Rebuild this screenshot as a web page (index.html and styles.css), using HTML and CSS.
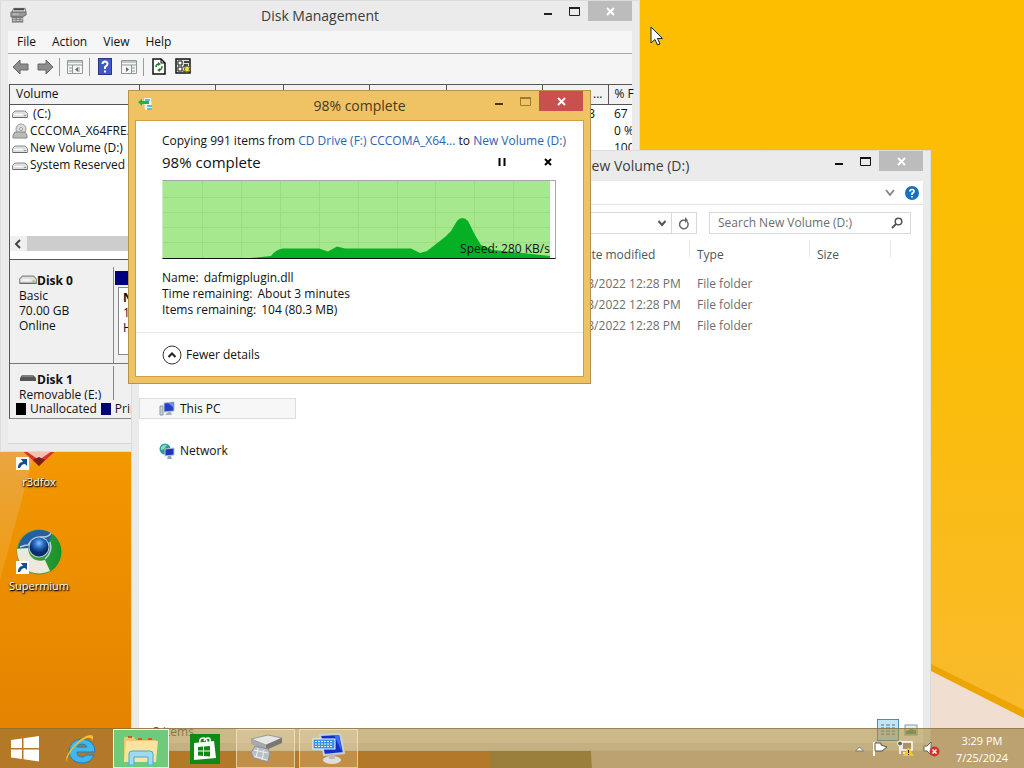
FILE: index.html
```html
<!DOCTYPE html>
<html lang="en">
<head>
    <meta charset="UTF-8">
    <meta name="viewport" content="width=device-width, initial-scale=1.0">
    <title>Desktop</title>
    <link rel="stylesheet" href="styles.css">
</head>
<body>
  <svg class="wallpaper" viewBox="0 0 1024 768" preserveAspectRatio="none" aria-hidden="true">
    <defs>
      <linearGradient id="wallLeft" x1="0" y1="0" x2="0" y2="1">
        <stop offset="0.55" stop-color="#f39a00"/><stop offset="1" stop-color="#e38000"/>
      </linearGradient>
      <linearGradient id="wallRight" x1="0" y1="0" x2="0" y2="1">
        <stop offset="0" stop-color="#fdbe00"/><stop offset="0.5" stop-color="#fbbd08"/><stop offset="1" stop-color="#f9ba2c"/>
      </linearGradient>
      <linearGradient id="wallSlice" x1="0" y1="0" x2="0" y2="1">
        <stop offset="0" stop-color="#e9a645"/><stop offset="1" stop-color="#f09c10"/>
      </linearGradient>
    </defs>
    <rect width="490" height="768" fill="url(#wallLeft)"/>
    <rect y="729" width="490" height="39" fill="#c4600c"/>
    <path d="M0 440H38L0 580Z" fill="url(#wallSlice)"/>
    <path d="M490 700H588L592 768H490Z" fill="#856e3c"/>
    <path d="M588 700H1024V768H592Z" fill="#dcc6c0"/>
    <path d="M925 660L1024 712V729H925Z" fill="#f0dfd0"/>
    <path d="M600 0H1024V718L931 671L600 500Z" fill="#eda405"/>
    <path d="M600 0H1024V710L931 664L600 500Z" fill="url(#wallRight)"/>
  </svg>

  <div class="shortcut shortcut-fox">
    <svg width="48" height="48" viewBox="0 0 48 48">
      <path d="M0 20L24 42L48 20L36 26L24 28L12 26Z" fill="#d8322f"/>
      <path d="M8 25L24 36L40 25Z" fill="#f4c3ac"/>
      <path d="M18 36L24 42L30 36L24 33Z" fill="#7c1f1a"/>
      <rect x="1" y="33" width="13" height="13" fill="#fff"/>
      <path d="M3 44C3 40 5 38 8 38L6 35H12V42L10 40C7 40 6 42 5 44Z" fill="#184d8f"/>
    </svg>
    <span>r3dfox</span>
  </div>
  <div class="shortcut shortcut-supermium">
    <svg width="48" height="48" viewBox="0 0 48 48">
      <defs>
        <radialGradient id="ball" cx="0.5" cy="0.3"><stop offset="0" stop-color="#7fc4ff"/><stop offset="0.5" stop-color="#2a6cc4"/><stop offset="1" stop-color="#0b2a6c"/></radialGradient>
        <linearGradient id="ring" x1="0" y1="0" x2="1" y2="0"><stop offset="0" stop-color="#5da545"/><stop offset="1" stop-color="#15922a"/></linearGradient>
      </defs>
      <circle cx="24" cy="24" r="22.500" fill="url(#ring)"/>
      <path d="M3 20C6 4 24 -3 37 6L33 17C27 8 15 11 13 21Z" fill="#2461a3"/>
      <path d="M2 21L13 20C14 32 23 34 30 32L35 43C20 50 2 42 2 21Z" fill="#ece8dc"/>
      <path d="M5 19Q10 17 13 17Q18 8 28 9Q34 9 36 5M35 14Q38 24 30 31" fill="none" stroke="#b9d2df" stroke-width="1.500"/>
      <circle cx="24" cy="19" r="10.500" fill="#b4ccd8"/>
      <circle cx="24" cy="19" r="9.500" fill="url(#ball)"/>
      <rect x="1" y="33" width="13" height="13" fill="#fff"/>
      <path d="M3 44C3 40 5 38 8 38L6 35H12V42L10 40C7 40 6 42 5 44Z" fill="#184d8f"/>
    </svg>
    <span>Supermium</span>
  </div>

  <!-- Disk Management -->
  <section class="window disk-window">
    <header class="titlebar">
      <svg class="title-icon" width="17" height="18" viewBox="0 0 18 18">
        <path d="M4 2H16L17 6H2Z" fill="#e4e4e4" stroke="#777"/>
        <path d="M4 3H15" stroke="#444" stroke-width="2"/>
        <path d="M1 6H17V9L13 11H1Z" fill="#999" stroke="#666"/>
        <path d="M2 11H14V17H2Z" fill="#777"/>
        <path d="M3 8H9M3 13H14M3 15H13" stroke="#ddd" stroke-dasharray="3 1"/>
      </svg>
      <h1>Disk Management</h1>
      <div class="controls">
        <button aria-label="Minimize"><svg width="11" height="11"><path d="M2 8H10" stroke="#222" stroke-width="2"/></svg></button>
        <button aria-label="Maximize"><svg width="11" height="11"><path d="M.5 2V9.500H10.500V2" fill="none" stroke="#222"/><path d="M0 2H11" stroke="#222" stroke-width="2"/></svg></button>
        <button class="close" aria-label="Close"><svg width="9" height="9"><path d="M1 1L8 8M8 1L1 8" stroke="#fff" stroke-width="2"/></svg></button>
      </div>
    </header>
    <div class="window-body disk-body">
      <nav class="menubar">
        <button>File</button>
        <button>Action</button>
        <button>View</button>
        <button>Help</button>
      </nav>
      <div class="toolbar">
        <button aria-label="Back"><svg width="18" height="16"><path d="M1 8L8 1V5H16V11H8V15Z" fill="#8d8d8d" stroke="#666"/></svg></button>
        <button aria-label="Forward"><svg width="18" height="16"><path d="M17 8L10 1V5H2V11H10V15Z" fill="#8d8d8d" stroke="#666"/></svg></button>
        <i class="divider"></i>
        <button aria-label="Console tree"><svg width="16" height="14"><path d="M.5 .5H15.500V13.500H.5Z" fill="#f6f6f6" stroke="#8d9996"/><path d="M1 2H15M1 5H15" stroke="#8d9996"/><path d="M5.500 5V13M2 8H5M2 11H5M12 7V12" stroke="#8d9996"/><path d="M11 7V12L8 9.500Z" fill="#667"/></svg></button>
        <i class="divider"></i>
        <button aria-label="Help"><svg width="14" height="17"><rect x=".5" y=".5" width="13" height="16" fill="#4059c4" stroke="#26388c"/><path d="M4.500 6Q4.500 3.500 7 3.500T9.500 6Q9.500 7.500 7 9V11M7 12.500V14.500" fill="none" stroke="#fff" stroke-width="2"/></svg></button>
        <button aria-label="Action pane"><svg width="16" height="14"><path d="M.5 .5H15.500V13.500H.5Z" fill="#f6f6f6" stroke="#8d9996"/><path d="M1 2H15M1 5H15" stroke="#8d9996"/><path d="M10.500 5V13M11 8H14M11 11H14" stroke="#8d9996"/><path d="M5 7V12L8 9.500Z" fill="#667"/></svg></button>
        <i class="divider"></i>
        <button aria-label="Refresh"><svg width="14" height="17"><path d="M1 1H9L13 5V16H1Z" fill="#fff" stroke="#111" stroke-width="1.500"/><path d="M9 1V5H13" fill="none" stroke="#111"/><path d="M4 9Q4 6 7 6M10 8Q10 12 7 12" fill="none" stroke="#2c7a2c" stroke-width="1.500"/><path d="M6 4L9 6L6 8ZM8 10L5 12L8 14Z" fill="#2c7a2c"/></svg></button>
        <button aria-label="Settings"><svg width="17" height="17"><rect x="1" y="1" width="14" height="14" fill="#ddd" stroke="#111" stroke-width="1.500"/><path d="M3 3H7V7H3ZM3 9H7V13H3Z" fill="#fff" stroke="#111"/><path d="M9 4H14M9 7H13" fill="none" stroke="#111" stroke-width="1.500"/><path d="M12 6L13 9L16 8L14 11L16 14L13 13L12 16L11 13L8 14L10 11L8 8L11 9Z" fill="#f0e428" stroke="#554"/></svg></button>
      </div>
      <div class="volumes">
        <table class="volume-table">
          <colgroup><col class="c-volume"><col class="c-layout"><col class="c-type"><col class="c-fs"><col class="c-status"><col class="c-cap"><col class="c-free"><col></colgroup>
          <thead>
            <tr><th>Volume</th><th></th><th></th><th></th><th></th><th></th><th class="right">...</th><th>% F</th></tr>
          </thead>
          <tbody>
            <tr><td><svg class="drive" width="16" height="9"><use href="#drive"/></svg>&nbsp;(C:)</td><td></td><td></td><td></td><td></td><td></td><td class="free">3</td><td>67</td></tr>
            <tr><td><svg class="drive" width="16" height="16"><circle cx="9" cy="6" r="5" fill="#ddd" stroke="#999"/><circle cx="9" cy="6" r="1.500" fill="#fff" stroke="#999"/><path d="M3 9H13L15 12V15H1V12Z" fill="#bbb" stroke="#888"/></svg>CCCOMA_X64FRE...</td><td></td><td></td><td></td><td></td><td></td><td></td><td>0 %</td></tr>
            <tr><td><svg class="drive" width="16" height="9"><use href="#drive"/></svg>New Volume (D:)</td><td></td><td></td><td></td><td></td><td></td><td></td><td>100</td></tr>
            <tr><td><svg class="drive" width="16" height="9"><use href="#drive"/></svg>System Reserved</td><td></td><td></td><td></td><td></td><td></td><td></td><td></td></tr>
          </tbody>
        </table>
        <div class="scrollbar">
          <button aria-label="Scroll left"><svg width="8" height="10"><path d="M6 1L2 5L6 9" fill="none" stroke="#444" stroke-width="2"/></svg></button>
          <div class="thumb"></div>
        </div>
      </div>
      <div class="disks">
        <div class="disk-row">
          <div class="disk-label">
            <strong><svg width="18" height="10"><use href="#drive"/></svg>Disk 0</strong>
            <span>Basic</span><span>70.00 GB</span><span>Online</span>
          </div>
          <div class="partition">
            <div class="stripe"></div>
            <div class="part-box"><strong>N</strong><span>1</span><span>H</span></div>
          </div>
        </div>
        <div class="disk-row">
          <div class="disk-label">
            <strong><svg width="18" height="10"><path d="M3 1H14L17 4V7H1V4Z" fill="#555"/><path d="M3 2H14" stroke="#aaa"/></svg>Disk 1</strong>
            <span>Removable (E:)</span>
          </div>
        </div>
      </div>
      <div class="legend"><i class="swatch black"></i>Unallocated<i class="swatch navy"></i>Primary</div>
      <div class="statusbar"></div>
    </div>
  </section>

  <!-- Explorer -->
  <section class="window explorer-window">
    <header class="titlebar">
      <h1>New Volume (D:)</h1>
      <div class="controls">
        <button aria-label="Minimize"><svg width="11" height="11"><path d="M2 8H10" stroke="#111" stroke-width="2"/></svg></button>
        <button aria-label="Maximize"><svg width="11" height="11"><path d="M.5 2V9.500H10.500V2" fill="none" stroke="#111"/><path d="M0 2H11" stroke="#111" stroke-width="2"/></svg></button>
        <button class="close" aria-label="Close"><svg width="9" height="9"><path d="M1 1L8 8M8 1L1 8" stroke="#fff" stroke-width="2"/></svg></button>
      </div>
    </header>
    <div class="window-body explorer-body">
      <div class="ribbon">
        <button aria-label="Expand ribbon"><svg width="10" height="8"><path d="M1 1L5 6L9 1" fill="none" stroke="#888" stroke-width="2"/></svg></button>
        <button aria-label="Help"><svg width="14" height="14"><circle cx="7" cy="7" r="7" fill="#1670c0"/><path d="M5 5.500Q5 3.500 7 3.500T9 5.500Q9 6.500 7 7.500V9M7 10V11.500" fill="none" stroke="#fff" stroke-width="1.700"/></svg></button>
      </div>
      <div class="address-row">
        <div class="address">
          <button class="drop" aria-label="Previous locations"><svg width="10" height="7"><path d="M1.500 1L5 5L8.500 1" fill="none" stroke="#555" stroke-width="2"/></svg></button>
          <button class="reload" aria-label="Refresh"><svg width="12" height="13"><path d="M9 4.500A4.300 4.300 0 1 1 5 3.200H8" fill="none" stroke="#666" stroke-width="1.500"/><path d="M7 0L10 3.200L7 6Z" fill="#666"/></svg></button>
        </div>
        <label class="search">
          <input type="text" placeholder="Search New Volume (D:)" aria-label="Search New Volume (D:)">
          <svg width="12" height="12"><circle cx="7.500" cy="4.500" r="3.300" fill="none" stroke="#555" stroke-width="1.500"/><path d="M5 7L1 11" stroke="#555" stroke-width="2"/></svg>
        </label>
      </div>
      <div class="explorer-main">
        <nav class="tree">
          <a class="selected" href="#"><svg width="16" height="16"><path d="M1 5H4V14H1Z" fill="#ccd3da" stroke="#8b98a6"/><path d="M5 2L15 1V10L5 11Z" fill="#2540c8" stroke="#b7c4d8"/><path d="M9 2L15 1V7Z" fill="#6c8bf0"/><path d="M6 14L9 11H12L13 14Z" fill="#a7b2bd"/></svg>This PC</a>
          <a href="#"><svg width="16" height="16"><circle cx="6" cy="6" r="5.500" fill="#2f9a9c"/><path d="M2 4Q5 1 8 2L5 6L2 7Z" fill="#8fd9c0"/><path d="M6 6L15 5V12L6 13Z" fill="#2035bd" stroke="#b7c4d8"/><path d="M9 13H12L13 16H8Z" fill="#98a5b4"/></svg>Network</a>
        </nav>
        <table class="files">
          <colgroup><col class="f-name"><col class="f-date"><col class="f-type"><col class="f-size"></colgroup>
          <thead><tr><th></th><th>Date modified</th><th>Type</th><th>Size</th></tr></thead>
          <tbody>
            <tr><td></td><td>4/8/2022 12:28 PM</td><td>File folder</td><td></td></tr>
            <tr><td></td><td>4/8/2022 12:28 PM</td><td>File folder</td><td></td></tr>
            <tr><td></td><td>4/8/2022 12:28 PM</td><td>File folder</td><td></td></tr>
          </tbody>
        </table>
      </div>
      <div class="explorer-status">
        <span>3 items</span>
        <div class="views">
          <button class="active" aria-label="Details"><svg width="16" height="14"><path d="M1 2H4M1 5H4M1 8H4M1 11H4M6 2H10M12 2H15M6 5H10M12 5H15M6 8H10M12 8H15M6 11H10M12 11H15" stroke="#51758a"/></svg></button>
          <button aria-label="Large icons"><svg width="14" height="12"><rect x="1" y="1" width="12" height="10" fill="#dfeef2" stroke="#8a9a9c"/><path d="M2 7L7 5L12 6V10H2Z" fill="#4f9a66"/></svg></button>
        </div>
      </div>
    </div>
  </section>

  <!-- Copy progress -->
  <section class="window copy-window">
    <header class="titlebar">
      <svg class="title-icon" width="16" height="16" viewBox="0 0 16 16">
        <path d="M6 2H13L14 14H7Z" fill="#e9f5fa"/>
        <path d="M7 4H12M9 10H14M9 13H14" stroke="#6fb6d8" stroke-width="2"/>
        <path d="M0 6L4 3V5H11V8H4V10Z" fill="#27b04a"/>
      </svg>
      <h1>98% complete</h1>
      <div class="controls">
        <button aria-label="Minimize"><svg width="11" height="11"><path d="M2 8H10" stroke="#4b3410" stroke-width="2"/></svg></button>
        <button aria-label="Maximize"><svg width="11" height="11"><path d="M.5 2V9.500H10.500V2" fill="none" stroke="#9c7c34"/><path d="M0 2H11" stroke="#9c7c34" stroke-width="2"/></svg></button>
        <button class="close" aria-label="Close"><svg width="9" height="9"><path d="M1 1L8 8M8 1L1 8" stroke="#fff" stroke-width="2"/></svg></button>
      </div>
    </header>
    <div class="window-body copy-body">
      <div class="copy-main">
        <p>Copying 991 items from <a href="#">CD Drive (F:) CCCOMA_X64...</a> to <a href="#">New Volume (D:)</a></p>
        <div class="progress-head">
          <h2>98% complete</h2>
          <button aria-label="Pause"><svg width="8" height="8"><path d="M1.500 0V8M6.500 0V8" stroke="#000" stroke-width="2"/></svg></button>
          <button aria-label="Cancel"><svg width="8" height="8"><path d="M1 1L7 7M7 1L1 7" stroke="#000" stroke-width="2"/></svg></button>
        </div>
        <div class="graph">
          <svg viewBox="0 0 392 77" preserveAspectRatio="none">
            <rect width="387" height="77" fill="#a6e88d"/>
            <path d="M0 16.500H387M0 31.500H387M0 46.500H387M0 61.500H387M39.500 0V77M78.500 0V77M117.500 0V77M156.500 0V77M195.500 0V77M234.500 0V77M272.500 0V77M311.500 0V77M350.500 0V77" stroke="#9bdc83"/>
            <path d="M88 77L108 75Q113 68 120 67.500H156L165 70.500L174 65.500L182 67.500H248L257 72L264 70L282 56L288 50L294 40Q299 34 305 40L312 54L318 64L330 69L350 71L387 75V77Z" fill="#06b025"/>
          </svg>
          <span>Speed: 280 KB/s</span>
        </div>
        <dl>
          <div><dt>Name:</dt><dd>dafmigplugin.dll</dd></div>
          <div><dt>Time remaining:</dt><dd>About 3 minutes</dd></div>
          <div><dt>Items remaining:</dt><dd>104 (80.3 MB)</dd></div>
        </dl>
      </div>
      <footer>
        <button class="details">
          <svg width="20" height="20"><circle cx="10" cy="10" r="9" fill="#fff" stroke="#333"/><path d="M6.500 12L10 8.500L13.500 12" fill="none" stroke="#222" stroke-width="2"/></svg>
          Fewer details
        </button>
      </footer>
    </div>
  </section>

  <footer class="taskbar">
    <button class="task start" aria-label="Start"><svg width="28" height="26"><path d="M0 4L11 2.500V12H0ZM12.500 2.300L28 0V12H12.500ZM0 13.500H11V23L0 21.500ZM12.500 13.500H28V25.500L12.500 23.200Z" fill="#fff"/></svg></button>
    <button class="task" aria-label="Internet Explorer"><svg width="34" height="32"><path d="M31 19H13Q13 24 18 24Q21 24 22 22H30Q27 30 18 30Q5 29 5 18Q6 7 18 6Q31 7 31 19ZM13 14H23Q22 11 18 11Q14 11 13 14Z" fill="#43b7ea" stroke="#1a7fc4" fill-rule="evenodd"/><path d="M4 30Q-1 26 8 15Q18 3 26 2Q31 2 28 8Q28 4 23 5Q15 8 8 17Q1 27 4 30Z" fill="#f6c12c"/></svg></button>
    <button class="task open current" aria-label="File Explorer"><svg width="38" height="32"><path d="M2 4H12L14 7H34V29H2Z" fill="#e9c96b"/><path d="M4 8H36L34 29H2Z" fill="#f8e3a0"/><path d="M6 4H10M16 6H20M26 6H30" stroke="#cf5a3a" stroke-width="2"/><path d="M7 32V21Q7 18 10 18H28Q31 18 31 21V32H26V24H12V32Z" fill="#9edaf2" stroke="#4ea7d0"/></svg></button>
    <button class="task" aria-label="Store"><svg width="30" height="30"><rect width="30" height="30" fill="#0f8a14"/><path d="M4 9L24 7L26 24L4 26Z" fill="#fff"/><path d="M10 9Q9 4 13 4T17 9M14 7Q15 4 18 4T20 8" fill="none" stroke="#fff" stroke-width="1.500"/><path d="M8 13L13 12.500V16.500H8ZM14 12.400L20 12V16.500H14ZM8 17.500H13V22L8 21.500ZM14 17.500H20V22.500L14 22Z" fill="#0f8a14"/></svg></button>
    <button class="task open" aria-label="Disk Management"><svg width="36" height="32"><path d="M3 6L20 2L34 5L18 12Z" fill="#e6e6e6" stroke="#999"/><path d="M3 6L18 12V17L3 11Z" fill="#aaa"/><path d="M18 12L34 5V10L18 17Z" fill="#777"/><path d="M7 13L20 16L22 20L20 29L6 25L3 20Z" fill="#b9bfc6" stroke="#8a9098"/><path d="M6 17L20 20M6 23L19 27M10 15L8 25M16 17L14 27" stroke="#eee"/></svg></button>
    <button class="task open" aria-label="Keyboard"><svg width="34" height="32"><path d="M8 2L28 1L32 20L12 22Z" fill="#1330c4" stroke="#c6d2e4" stroke-width="2"/><path d="M22 2L27 2L30 19Z" fill="#3c6cf0"/><ellipse cx="20" cy="27" rx="9" ry="4" fill="#ddd"/><path d="M17 21H23V26H17Z" fill="#bbb"/><rect x="1" y="6" width="22" height="10" fill="#3f8fe0" stroke="#dff"/><path d="M3 8.500H21M3 11H21M3 13.500H21" stroke="#fff" stroke-dasharray="2 1"/></svg></button>
    <div class="tray">
      <button aria-label="Show hidden icons"><svg width="9" height="6"><path d="M.5 5L4.500 1L8.500 5Z" fill="#fff" stroke="#776"/></svg></button>
      <button aria-label="Action Center"><svg width="15" height="16"><path d="M1 1V15" stroke="#fff" stroke-width="2"/><path d="M2 2H8V4L14 6L9 10H2Z" fill="#fff" stroke="#554"/></svg></button>
      <button aria-label="Network"><svg width="17" height="17"><rect x="5" y="2" width="10" height="8" fill="#a8926a" stroke="#fff" stroke-width="1.500"/><circle cx="3" cy="3.500" r="2.500" fill="#665" stroke="#fff"/><path d="M3 6V14M6 13H12" stroke="#fff" stroke-width="1.500"/><path d="M11.500 7L17 16H6Z" fill="#f6c918"/><path d="M11.500 10V13M11.500 14V15" stroke="#222"/></svg></button>
      <button aria-label="Volume muted"><svg width="17" height="16"><path d="M1 5H4L8 1V14L4 10H1Z" fill="#fff" stroke="#665"/><circle cx="11.500" cy="10.500" r="5" fill="#d5302c"/><path d="M9.500 8.500L13.500 12.500M13.500 8.500L9.500 12.500" stroke="#fff" stroke-width="1.500"/></svg></button>
      <time class="clock"><span>3:29 PM</span><span>7/25/2024</span></time>
    </div>
  </footer>

  <svg class="cursor" width="14" height="20"><path d="M1 1V17L5 13.500L7.500 19L10 18L7.500 12.500H12.500Z" fill="#fff" stroke="#222"/></svg>

  <svg width="0" height="0" class="defs" aria-hidden="true">
    <symbol id="drive" viewBox="0 0 16 9"><path d="M3 1H13L15.500 3.500V7.500H.5V3.500Z" fill="#e0e0e0" stroke="#8a8a8a"/><path d="M1 7.500H15" stroke="#666"/><path d="M2 4.500H11" stroke="#fff"/><path d="M12 5.500H14" stroke="#7a7"/></symbol>
  </svg>
</body>
</html>
```
FILE: styles.css
```css
:root {
    --frame: #ebebeb;
    --amber: #efc364;
    --line: #d9d9d9;
}

* {
    box-sizing: border-box;
}

body {
    margin: 0;
    height: 100vh;
    overflow: hidden;
    position: relative;
    background: #f39c00;
    color: #111;
    font: 12px/16px "Open Sans", "Noto Sans", sans-serif;
}

h1, h2, p, dl, dd {
    margin: 0;
    font-weight: normal;
}

button {
    display: flex;
    align-items: center;
    justify-content: center;
    padding: 0;
    border: 0;
    background: none;
    color: inherit;
    font: inherit;
}

a {
    color: #2a63b0;
    text-decoration: none;
}

svg {
    flex: none;
}

.wallpaper {
    position: absolute;
    inset: 0;
    width: 100%;
    height: 100%;
}

.defs {
    position: absolute;
}

/* Desktop shortcuts */
.shortcut {
    position: absolute;
    left: 0;
    width: 78px;
    display: flex;
    flex-direction: column;
    align-items: center;
    gap: 2px;
    color: #fff;
    font-size: 11px;
    text-shadow: 0 1px 2px #000, 1px 1px 1px #000;
}

.shortcut-fox {
    top: 424px;
}

.shortcut-supermium {
    top: 528px;
}

/* Windows */
.window {
    position: absolute;
    display: flex;
    flex-direction: column;
    padding: 0 7px 7px;
    border: 1px solid #dcdcdc;
    background: var(--frame);
}

.titlebar {
    flex: none;
    display: grid;
    grid-template-columns: 1fr auto 1fr;
    height: 30px;
}

.titlebar h1 {
    grid-column: 2;
    color: #3c3c3c;
    font-size: 14px;
    line-height: 30px;
}

.title-icon {
    grid-column: 1;
    grid-row: 1;
    margin: 5px 0 0 2px;
}

.controls {
    grid-column: 3;
    display: flex;
    justify-content: flex-end;
    height: 20px;
}

.controls button {
    width: 27px;
}

.controls .close {
    width: 44px;
    background: #bcbcbc;
}

.window-body {
    flex: 1;
    min-height: 0;
    display: flex;
    flex-direction: column;
}

/* Disk Management */
.disk-window {
    left: 0;
    top: 0;
    width: 640px;
    height: 452px;
}

.disk-body {
    background: #f0f0f0;
}

.menubar {
    display: flex;
    gap: 16px;
    padding: 0 9px;
    height: 23px;
    border-bottom: 1px solid #a8a8a8;
    background: #f6f6f6;
}

.toolbar {
    display: flex;
    align-items: center;
    gap: 4px;
    padding: 0 3px 5px;
    height: 30px;
    background: #f5f5f5;
}

.toolbar button {
    width: 20px;
}

.toolbar .divider {
    width: 1px;
    height: 18px;
    margin-right: 1px;
    background: #9a9a9a;
}

.volumes {
    display: flex;
    flex-direction: column;
    height: 176px;
    margin-left: 1px;
    padding-bottom: 8px;
    border: 1px solid #555;
    border-right: 0;
    background: #fff;
}

.volume-table {
    table-layout: fixed;
    width: 100%;
    border-collapse: collapse;
}

.volume-table th {
    height: 19px;
    padding: 0 6px;
    border-right: 1px solid #555;
    border-bottom: 1px solid #555;
    background: #f2f2f2;
    font-weight: normal;
    text-align: left;
    white-space: nowrap;
}

.volume-table th:last-child {
    border-right: 0;
}

.volume-table .right {
    text-align: right;
    padding: 0 5px;
}

.volume-table td {
    height: 17px;
    padding: 0 2px;
    line-height: 17px;
    white-space: nowrap;
    overflow: hidden;
}

.volume-table th:last-child,
.volume-table td:last-child {
    padding: 0 0 0 6px;
}

.volume-table .free {
    text-align: right;
    padding-right: 13px;
}

.volume-table .drive {
    margin-right: 2px;
    vertical-align: middle;
}

.c-volume { width: 129px; }
.c-layout { width: 76px; }
.c-type { width: 68px; }
.c-fs { width: 86px; }
.c-status { width: 77px; }
.c-cap { width: 96px; }
.c-free { width: 66px; }

.scrollbar {
    display: flex;
    gap: 1px;
    height: 15px;
    margin-top: auto;
    background: #f0f0f0;
}

.scrollbar button {
    width: 16px;
}

.scrollbar .thumb {
    flex: 1;
    background: #cdcdcd;
}

.disks {
    height: 140px;
    margin-left: 1px;
    padding-top: 7px;
    overflow: hidden;
    border-left: 1px solid #555;
}

.disk-row {
    display: flex;
    height: 97px;
    margin-bottom: 2px;
    border-bottom: 1px solid #777;
}

.disk-label {
    width: 104px;
    padding: 6px 0 0 9px;
    border-right: 1px solid #888;
    line-height: 15px;
}

.disk-label span,
.disk-label strong,
.part-box span,
.part-box strong {
    display: block;
    white-space: nowrap;
}

.partition {
    flex: 1;
    padding: 4px 0 0 1px;
}

.stripe {
    height: 14px;
    background: #00007f;
}

.part-box {
    height: 68px;
    margin: 2px 0 0 3px;
    padding: 2px 4px;
    border: 1px solid #888;
    background: #fff;
    line-height: 15px;
}

.legend {
    display: flex;
    align-items: center;
    gap: 4px;
    height: 19px;
    margin-left: 1px;
    padding-left: 6px;
    border-left: 1px solid #555;
    border-bottom: 1px solid #888;
}

.swatch {
    width: 10px;
    height: 12px;
}

.black { background: #000; }
.navy { background: #00007f; }

.statusbar {
    height: 24px;
    margin-top: 1px;
    border-bottom: 1px solid #d6d6d6;
}

/* Explorer */
.explorer-window {
    left: 131px;
    top: 150px;
    width: 800px;
    height: 601px;
}

.explorer-window .titlebar {
    grid-template-columns: 442px auto 1fr;
}

.explorer-body {
    background: #fff;
}

.ribbon {
    display: flex;
    align-items: center;
    justify-content: flex-end;
    gap: 10px;
    height: 24px;
    padding-right: 4px;
    border-bottom: 1px solid #e6e6e6;
}

.address-row {
    display: flex;
    gap: 12px;
    padding: 7px 12px 0 70px;
}

.address,
.search {
    display: flex;
    height: 22px;
    border: 1px solid var(--line);
}

.address {
    flex: 1;
    justify-content: flex-end;
}

.address .drop {
    width: 18px;
}

.address .reload {
    width: 25px;
    border-left: 1px solid var(--line);
}

.search {
    width: 202px;
    align-items: center;
    padding: 0 7px 0 8px;
}

.search input {
    flex: 1;
    min-width: 0;
    padding: 0;
    border: 0;
    outline: 0;
    background: none;
    font: inherit;
}

.search input::placeholder {
    color: #6d6d6d;
    opacity: 1;
}

.explorer-main {
    flex: 1;
    min-height: 0;
    display: flex;
}

.tree {
    display: flex;
    flex-direction: column;
    gap: 21px;
    width: 190px;
    padding-top: 164px;
}

.tree a {
    display: flex;
    align-items: center;
    gap: 5px;
    width: 157px;
    height: 21px;
    padding-left: 19px;
    border: 1px solid transparent;
    color: #111;
}

.tree .selected {
    border-color: #dedede;
    background: #f7f7f7;
}

.files {
    align-self: flex-start;
    table-layout: fixed;
    width: 562px;
    margin-top: 6px;
    border-collapse: collapse;
    color: #6d6d6d;
}

/* column separators only reach part of the way down the header */
.files th {
    height: 33px;
    padding: 0 7px;
    background: linear-gradient(#e5e5e5, #e5e5e5) right top / 1px 17px no-repeat;
    color: #4c5560;
    font-weight: normal;
    line-height: 30px;
    text-align: left;
    vertical-align: top;
    white-space: nowrap;
}

.files td {
    height: 21px;
    padding: 0 7px;
    white-space: nowrap;
}

.f-name { width: 240px; }
.f-date { width: 121px; }
.f-type { width: 120px; }
.f-size { width: 81px; }

.explorer-status {
    display: flex;
    justify-content: space-between;
    height: 24px;
    padding: 0 0 0 14px;
    color: #555;
    line-height: 26px;
}

.views {
    display: flex;
}

.views button {
    width: 24px;
    height: 22px;
}

.views .active {
    width: 22px;
    border: 1px solid #3d94c4;
    background: #c2e6f8;
}

/* Copy dialog */
.copy-window {
    left: 128px;
    top: 90px;
    width: 463px;
    height: 294px;
    border-color: #b8924a;
    background: var(--amber);
}

.copy-window h1 {
    color: #4b3a18;
}

.copy-window .controls .close {
    background: #c9504f;
}

.copy-body {
    background: #fff;
    outline: 1px solid #d0a040;
}

.copy-main {
    flex: 1;
    padding: 12px 27px 0 26px;
}

.copy-main p {
    white-space: nowrap;
}

.progress-head {
    display: flex;
    align-items: center;
    height: 26px;
    gap: 38px;
    padding-right: 4px;
}

.progress-head h2 {
    flex: 1;
    font-size: 15px;
}

.graph {
    position: relative;
    height: 79px;
    margin-top: 5px;
    border: 1px solid #a8a8a8;
    border-left-color: #d3e8cb;
    border-bottom-color: #111;
}

.graph svg {
    display: block;
    width: 100%;
    height: 77px;
}

.graph span {
    position: absolute;
    right: 5px;
    bottom: 1px;
}

.copy-main dl {
    margin-top: 11px;
}

.copy-main dl div {
    display: flex;
    gap: 5px;
}

.copy-body footer {
    height: 44px;
    padding: 12px 26px;
    border-top: 1px solid #e4e8ec;
}

.details {
    gap: 4px;
}

/* Taskbar */
.taskbar {
    position: absolute;
    left: 0;
    right: 0;
    bottom: 0;
    display: flex;
    gap: 4px;
    height: 40px;
    border-top: 1px solid rgba(120, 95, 50, .6);
    background: rgba(168, 138, 60, .6);
}

.task {
    width: 54px;
    border: 1px solid transparent;
}

.task.start {
    width: 50px;
}

.task.open {
    width: 59px;
    border-color: rgba(255, 240, 205, .6);
    background: rgba(255, 235, 205, .2);
}

.task.current {
    width: 56px;
    margin: 0 5px 0 1px;
    border-color: #e9fbe6;
    background: #6fcb7a;
}

.tray {
    display: flex;
    align-items: center;
    gap: 9px;
    margin-left: auto;
    padding-right: 16px;
    color: #fff;
}

.clock {
    display: flex;
    flex-direction: column;
    align-items: center;
    margin-left: 7px;
    font-size: 11px;
    line-height: 17px;
}

.cursor {
    position: absolute;
    left: 650px;
    top: 26px;
}
```
